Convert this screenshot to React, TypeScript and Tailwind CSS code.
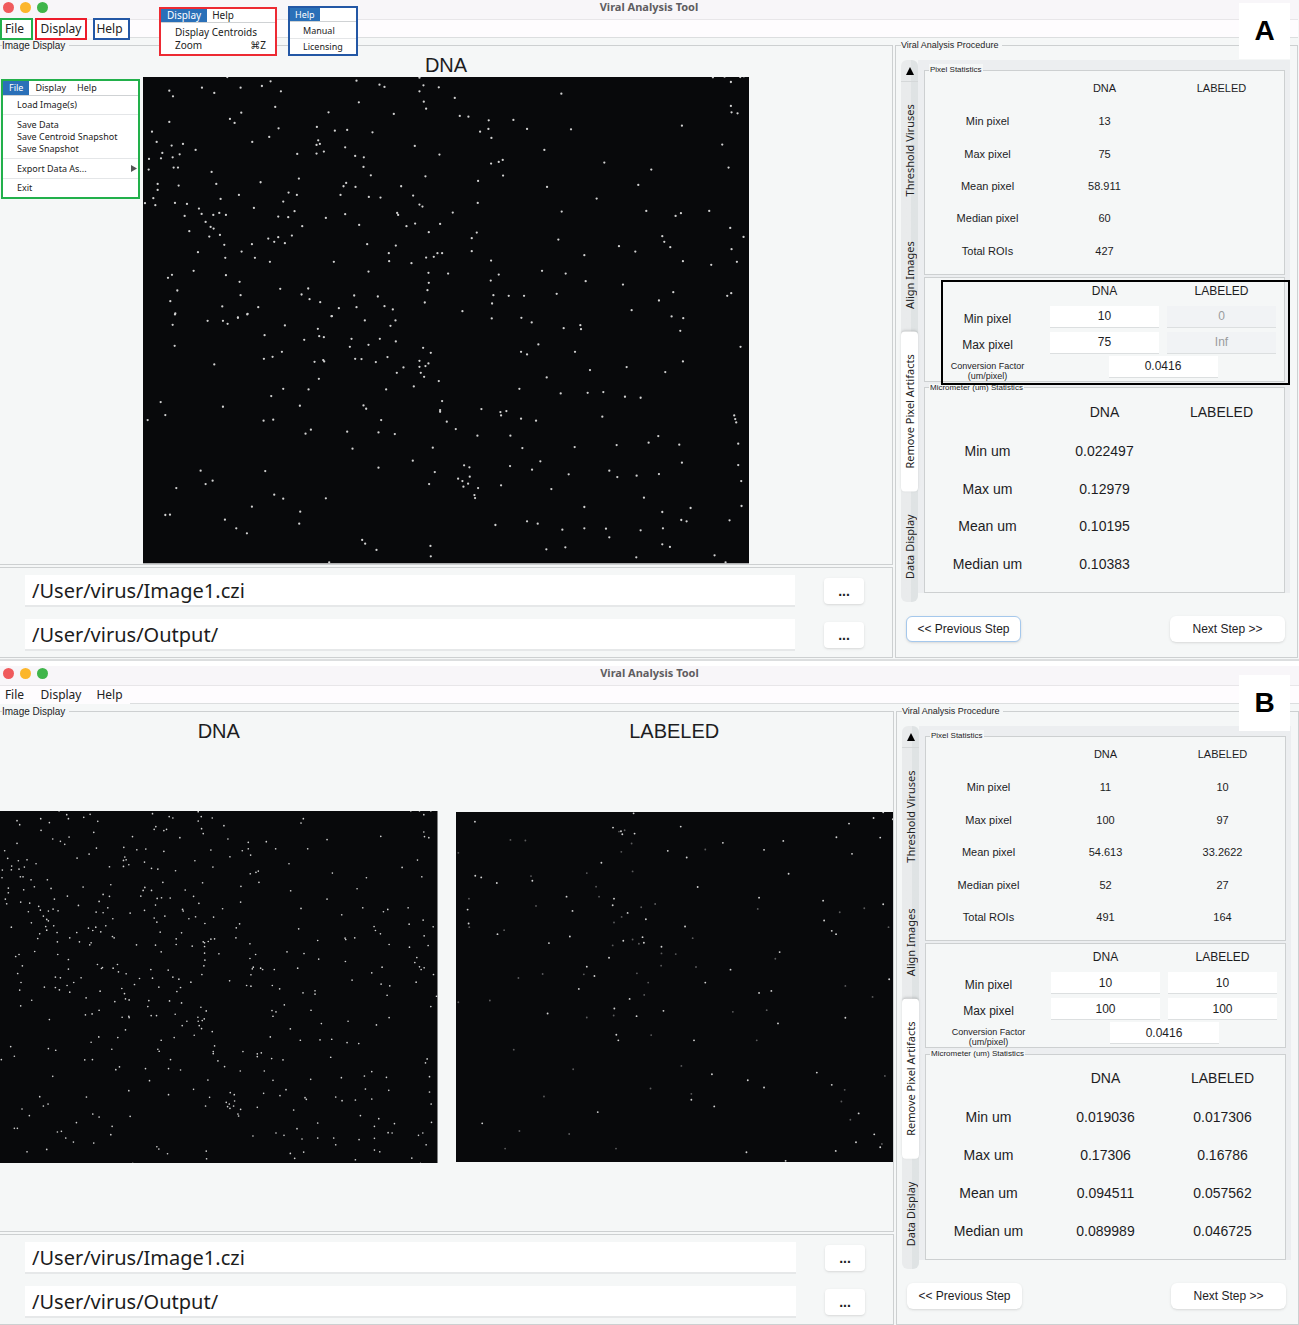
import React from 'react';
import { clsx } from 'clsx';

// Centroid lists, "x,y" pairs in scan units
const DNA_A_TOP_LEFT =
  '261,22 391,35 365,49 301,54 185,54 222,70 87,63 98,80 422,65 405,112 303,129 269,148 283,160 87,157 35,186 415,176 387,202 336,217 49,217 94,228 128,223 166,241 66,250 118,254 26,268 62,266 97,263 100,294 113,294 25,300 214,307 471,253 476,327 361,338 228,343 52,343 52,361 115,348 296,376 241,388 445,369 470,376 39,386 14,401 45,407 104,400 140,403 176,417 184,433 429,396 341,415 463,425 237,430 219,436 257,436 133,439 414,441 444,443 196,457 211,472 220,477 486,470 147,485 239,496 207,501 252,526 384,507 414,503 455,498 402,517 434,521 335,524 304,546 173,548 255,565 344,565 389,577 160,604 95,616 83,625 257,617 298,637 111,663 301,677 90,695 246,711 105,732 354,713 322,733 293,744 420,658 504,657 484,675 508,689 540,698 649,33 718,45 733,52 838,24 850,47 838,65 896,53 851,96 858,117 656,98 761,133 565,128 530,172 584,183 621,181 697,188 534,212 529,226 539,223 551,246 529,252 615,233 645,259 671,263 670,292 824,229 898,255 692,317 856,320 618,340 610,350 646,352 601,376 686,382 721,384 783,350 819,378 838,405 847,411 615,434 557,445 657,466 771,430 774,436 799,470 825,462 900,463 866,488 681,524 767,528 746,551 747,575 858,564 881,562 892,551 906,551 814,581 581,577 685,606 865,610 866,640 862,662 642,678 713,681 854,699 733,710 649,713 758,720 596,716 574,740';
const DNA_A_TOP_RIGHT =
  '29,85 349,72 44,139 70,141 131,152 205,151 130,178 105,186 139,205 246,178 378,179 298,241 173,271 161,277 138,282 174,318 99,334 478,279 619,300 580,346 306,352 455,387 98,400 23,429 350,426 604,424 95,489 80,506 80,545 340,510 418,557 571,546 652,500 658,517 676,533 708,431 692,439 793,424 856,475 896,502 860,539 876,577 714,575 799,586 138,573 161,615 137,633 9,612 291,604 362,612 422,635 534,645 145,677 191,679 237,679 335,673 141,702 52,725 685,668 642,693 560,722 847,679 859,671 804,23 839,21 886,22 897,20 858,37 858,109 860,128 878,131 711,168 832,225 851,294 522,530';
const DNA_A_BOTTOM_LEFT =
  '97,31 103,94 104,0 321,0 202,19 248,19 262,28 293,10 222,150 434,33 373,62 492,76 533,43 537,65 551,68 575,5 425,112 397,127 371,133 523,142 549,137 552,141 536,193 505,225 429,223 393,245 479,274 248,277 61,263 75,302 22,317 370,319 399,316 512,346 496,358 181,469 217,499 196,509 108,521 375,470 402,541 429,553 557,552 335,577 75,602 89,601 254,616 288,642 320,657 480,592 477,628 674,18 766,18 751,34 634,73 629,97 719,73 685,91 767,81 645,133 664,134 742,128 707,143 790,159 770,175 849,100 872,115 838,139 838,157 865,147 856,155 842,175 852,187 896,200 821,216 738,225 670,273 678,283 906,260 900,287 900,292 723,317 715,354 764,359 621,352 637,403 715,460 818,439 878,400 884,473 867,509 666,677 675,688 709,707 871,695 872,726 567,744';
const DNA_A_BOTTOM_RIGHT =
  '140,12 229,10 260,24 356,41 406,32 408,44 280,90 228,112 246,120 390,112 435,167 545,158 305,189 223,223 347,237 428,235 475,233 540,247 587,250 661,173 714,141 706,49 680,6 715,11 887,97 109,284 166,293 168,303 184,290 228,313 273,319 5,322 32,344 97,364 196,364 472,307 232,401 389,398 515,392 611,385 640,365 703,391 286,441 195,455 261,466 711,445 493,469 517,488 575,484 642,479 371,480 319,524 168,513 57,453 73,459 39,493 74,487 52,500 69,508 55,517 99,521 88,542 90,551 418,578 597,550 652,593 737,581 709,617 725,621 246,621 278,628 151,632 352,646 418,642 483,643 493,669 587,648 654,642 361,699 304,705 652,690 675,698 574,729 809,723 842,744 854,618 890,575 889,500 880,452 880,388 871,314 874,324 868,303';

const DNA_B =
  '177,20 200,31 205,43 270,30 251,39 293,51 122,43 148,55 51,49 59,61 123,78 281,84 207,98 158,104 181,111 194,120 51,117 289,131 267,149 231,161 14,139 23,162 55,169 81,166 108,178 35,185 73,188 57,194 34,196 7,197 6,220 61,217 69,217 93,226 142,226 103,247 153,252 71,256 25,251 25,265 249,248 16,284 20,298 62,293 89,296 163,284 202,275 116,306 121,317 85,322 145,320 159,314 174,319 235,303 130,335 140,345 145,349 94,355 137,366 161,364 34,368 140,377 119,388 113,402 171,384 172,412 209,400 230,384 238,412 397,97 371,129 410,136 437,134 374,158 378,166 370,168 386,181 370,186 328,187 433,173 454,192 473,194 457,28 507,37 518,41 467,67 462,75 491,79 499,75 539,100 491,141 594,22 603,37 594,50 636,41 604,73 609,88 671,64 584,169 632,137 683,104 689,157 638,188 526,199 488,234 607,235 332,241 434,249 429,258 454,258 422,275 309,270 328,276 297,291 555,257 580,276 471,282 484,280 510,281 466,302 433,318 390,326 323,310 309,325 288,323 338,343 494,335 462,341 470,353 547,315 549,320 566,343 586,337 640,338 667,313 596,297 614,357 480,383 544,385 317,364 287,368 265,371 278,378 302,382 337,396 342,400 273,415 269,421 409,421 466,422 483,442 528,403 528,420 576,425 609,412 613,415 624,411 632,404 643,403 613,426 613,446 614,467 611,484 605,510 656,448 104,441 173,450 205,465 205,494 57,450 47,456 67,484 53,507 292,480 307,489 304,492 339,491 352,480 355,502 378,508 166,518 181,520 243,520 221,534 63,534 133,548 166,549 201,543 178,556 209,563 59,557 95,587 62,604 258,580 300,560 418,522 452,495 457,521 504,497 518,518 536,524 572,533 541,549 530,561 476,548 403,540 365,552 373,567 376,583 387,586 344,591 446,588 443,606 508,589 544,595 453,633 469,633 525,629 602,608 618,619 593,638 594,650 612,643 606,648 597,663 604,672 560,650 546,663 636,681 582,692 522,699 297,617 276,628 256,631 148,645 366,638 386,635 387,639 376,676 353,699 296,697 273,713 335,734 483,707 473,734 477,740 643,724 639,741 639,747 511,765 653,769 505,792 541,796 436,792 347,795 358,787 32,726 43,755 4,765 145,732 167,737 254,766 277,765 158,815 673,786 623,826 448,828 386,858 505,870 580,854 628,878 616,904 119,876 144,898 130,904 66,913 88,933 259,877 278,928 297,937 390,935 229,954 336,965 332,990 43,971 52,971 172,982 184,980 197,1000 220,1012 281,1015 140,1034 81,1041 470,1026 476,1033 502,1047 618,1039 619,1062 398,1076 ' +
  '744,114 744,133 726,139 751,152 798,112 826,133 909,43 902,56 922,133 980,106 866,178 1141,96 1231,20 1257,20 1291,20 1270,31 1270,83 1272,97 1285,100 1251,167 1205,189 1264,217 774,200 767,204 750,208 776,234 722,246 721,293 871,259 996,206 1098,220 1070,253 980,284 902,312 1024,331 1087,310 1149,322 1162,315 1223,310 1268,347 1226,359 1298,367 1271,394 1283,423 1227,428 1121,366 1125,378 1140,388 1166,420 895,373 952,408 1034,401 1036,405 1063,400 718,358 708,370 707,400 749,418 766,450 749,462 860,442 911,447 955,464 1035,471 759,488 756,493 781,491 787,495 822,495 892,491 752,511 688,529 739,543 752,545 816,543 838,553 1055,527 1114,505 1145,488 1142,539 1168,544 1160,572 1249,459 1243,474 1257,487 1271,490 1262,495 1299,510 1247,533 1308,575 1291,606 908,565 944,559 944,569 852,601 815,618 827,622 818,635 932,617 963,657 1043,650 1128,661 1166,639 870,673 810,697 900,707 959,706 994,704 1040,714 1075,717 991,758 728,741 771,748 783,745 771,756 814,762 848,766 720,799 792,799 818,827 931,824 1023,819 1092,814 1114,801 1158,818 1165,857 1095,853 857,855 839,873 790,866 914,879 918,884 1006,877 1025,888 1065,886 1114,883 771,908 880,916 690,864 702,870 678,893 687,898 703,889 700,904 682,906 689,911 721,914 713,928 715,934 1280,763 1275,775 1287,816 1287,862 1292,898 1293,953 1080,933 1135,942 1122,965 1182,957 952,955 890,972 851,992 827,985 758,994 905,1003 952,1000 1000,1000 1006,1020 1076,1005 1122,1001 1163,984 1175,985 1254,992 1267,985 1277,1020 870,1046 883,1061 910,1042 1122,1036 1138,1041 1065,1065 1234,1060 1260,1076';

const LABELED_B =
  '550,24 72,49 488,67 512,78 516,87 553,85 692,64 653,137 710,157 819,113 453,173 73,212 91,217 245,227 138,234 743,246 348,275 366,318 491,281 487,301 532,324 587,343 705,365 358,395 519,408 581,414 577,397 295,415 140,388 53,356 50,314 476,459 409,486 432,514 385,553 538,583 492,612 640,619 559,635 291,627 498,691 504,708 732,708 766,534 842,495 634,426 990,442 965,559 928,278 1199,55 1273,38 1302,21 1331,42 1161,96 1293,97 1208,146 1001,107 1017,206 1121,287 1302,298 1124,347 1147,378 1160,388 1320,524 1188,640 985,657 786,810 894,828 943,850 1102,805 1147,842 724,887 793,907 442,924 94,958 1228,928 1275,991 1220,1015 1293,1030 1159,1041 890,1045 1008,1071 928,565 943,134';
const LABELED_B_FAINT =
  '179,104 224,106 22,143 241,213 409,204 437,245 446,275 54,281 256,303 547,199 544,115 513,140 523,75 506,79 573,307 615,297 514,336 491,353 547,404 566,417 487,422 634,446 633,483 677,448 738,487 728,400 560,506 594,534 582,571 276,508 203,520 400,509 117,588 22,593 409,639 490,633 603,692 189,736 368,795 694,785 280,877 601,853 724,869 921,708 849,622 951,617 924,312 977,462 1171,322 1245,310 1318,367 1188,544 1270,577 1307,815 1186,857 1176,892 1203,947 1298,1020 206,981 163,1034 497,1034 160,376 55,367 766,133 356,990';

interface Centroids {
  points: string;
  dx?: number;
  dy?: number;
  faint?: boolean;
}

interface MicrographProps {
  title: string;
  viewBox: string;
  layers: Centroids[];
  radius: number;
}

interface Row {
  name: string;
  dna: string;
  labeled?: string;
}

const Micrograph: React.FC<MicrographProps> = ({ title, viewBox, layers, radius }) => {
  const [x, y, w, h] = viewBox.split(' ').map(Number);
  return (
    <svg viewBox={viewBox} className="block w-full" role="img" aria-label={`${title} image`}>
      <rect x={x} y={y} width={w} height={h} fill="#08090b" />
      {layers.map(({ points, dx = 0, dy = 0, faint }, i) => (
        <g key={i} transform={`translate(${dx} ${dy})`} fill={faint ? '#5c5c5e' : '#d2d2d2'}>
          {points.split(' ').map((p) => {
            const [cx, cy] = p.split(',');
            return <circle key={p} cx={cx} cy={cy} r={radius} />;
          })}
        </g>
      ))}
    </svg>
  );
};

const StatsTable: React.FC<{ rows: Row[]; className: string; headClassName: string }> = ({ rows, className, headClassName }) => (
  <table className={clsx('w-full grow table-fixed text-center', className)}>
    <thead>
      <tr className={headClassName}>
        <td />
        <th className="font-normal">DNA</th>
        <th className="font-normal">LABELED</th>
      </tr>
    </thead>
    <tbody>
      {rows.map((row) => (
        <tr key={row.name}>
          <th className="font-normal">{row.name}</th>
          <td>{row.dna}</td>
          <td>{row.labeled}</td>
        </tr>
      ))}
    </tbody>
  </table>
);

const TABS = ['Threshold Viruses', 'Align Images', 'Remove Pixel Artifacts', 'Data Display'];

const TabStrip: React.FC = () => (
  <div role="tablist" className="flex w-[17px] shrink-0 flex-col rounded-md bg-linear-to-r from-[#e9ebec] from-60% to-[#dfe3e4] to-60%">
    <button aria-label="Scroll tabs up" className="flex h-[22px] items-center justify-center border-b border-[#d5d8d9]">
      <svg width="8" height="8" viewBox="0 0 8 8">
        <path d="M4 0L8 8H0Z" fill="#000" />
      </svg>
    </button>
    {TABS.map((tab) => {
      const active = tab === 'Remove Pixel Artifacts';
      return (
        <button
          key={tab}
          role="tab"
          aria-selected={active}
          className={clsx(
            'w-[17px] flex-auto rotate-180 pt-4 pb-4 text-center font-["Noto_Sans",sans-serif] text-[11px] leading-[17px] whitespace-nowrap text-[#222] [writing-mode:vertical-rl]',
            active && 'rounded bg-white shadow-sm'
          )}
        >
          {tab}
        </button>
      );
    })}
  </div>
);

interface FieldProps {
  label: string;
  value: string;
  disabled?: boolean;
}

const NumberField: React.FC<FieldProps> = ({ label, value, disabled }) => (
  <input
    type="text"
    aria-label={label}
    defaultValue={value}
    disabled={disabled}
    className="block h-[22px] w-[109px] border-b border-[#dcdfe0] bg-white text-center text-[12px] disabled:bg-[#f1f3f5] disabled:text-[#9a9c9e]"
  />
);

interface ThresholdProps {
  min: string[];
  max: string[];
  labeled: boolean;
  highlighted?: boolean;
}

const ThresholdForm: React.FC<ThresholdProps> = ({ min, max, labeled, highlighted }) => (
  <div className="relative h-[105px] border border-[#cdd0d1] bg-[#f5f7f7] px-1">
    <div className="grid auto-rows-[26px] grid-cols-3 items-center justify-items-center text-[12px]">
      <span />
      <span>DNA</span>
      <span>LABELED</span>
      <span className="self-end leading-[22px]">Min pixel</span>
      <NumberField label="Min pixel DNA" value={min[0]} />
      <NumberField label="Min pixel LABELED" value={min[1]} disabled={!labeled} />
      <span className="self-end leading-[22px]">Max pixel</span>
      <NumberField label="Max pixel DNA" value={max[0]} />
      <NumberField label="Max pixel LABELED" value={max[1]} disabled={!labeled} />
    </div>
    <div className="grid h-[25px] grid-cols-3 justify-items-center">
      <span className="pt-[5px] text-center text-[9px] leading-[10px]">
        Conversion Factor
        <br />
        (um/pixel)
      </span>
      <div className="col-span-2">
        <NumberField label="Conversion Factor (um/pixel)" value="0.0416" />
      </div>
    </div>
    {highlighted && <div className="pointer-events-none absolute top-[2px] -right-[6px] -bottom-[4px] left-4 border-2 border-black" />}
  </div>
);

interface PathRowProps {
  label: string;
  value: string;
}

const PathRow: React.FC<PathRowProps> = ({ label, value }) => (
  <div className="flex items-center gap-[29px]">
    <input
      type="text"
      aria-label={label}
      defaultValue={value}
      className='h-8 min-w-0 grow border-b-2 border-[#e6e8e9] bg-white px-[7px] font-["Noto_Sans",sans-serif] text-[20px] text-[#1c1c1c]'
    />
    <button aria-label={`Browse ${label}`} className="h-[26px] w-10 rounded bg-white text-[14px] font-bold shadow-sm">
      ...
    </button>
  </div>
);

const MENU_BOX = 'absolute bg-white border-2 font-["Noto_Sans",sans-serif] text-[#222]';
const MENU_ACTIVE = 'bg-[#2a70b8] px-[6px] text-white';

// Expanded menus shown on top of the window
const OpenMenus: React.FC = () => (
  <>
    <div className={clsx(MENU_BOX, 'top-[7px] left-[159px] w-[118px] border-[#ed2a33] pb-[2px] text-[10px] leading-[13px]')}>
      <div className="mb-[3px] flex gap-[5px] border-b border-[#cfd2d4]">
        <span className={MENU_ACTIVE}>Display</span>
        <span>Help</span>
      </div>
      <div role="menu" className="flex flex-col pr-[9px] pl-[14px]">
        <button role="menuitem" className="text-left whitespace-nowrap">Display Centroids</button>
        <button role="menuitem" className="flex justify-between">
          <span>Zoom</span>
          <span className='font-["Noto_Sans","DejaVu_Sans",sans-serif]'>⌘Z</span>
        </button>
      </div>
    </div>
    <div className={clsx(MENU_BOX, 'top-[6px] left-[288px] w-[70px] border-[#2357a5] text-[9px] leading-[13px]')}>
      <div className="flex border-b border-[#cfd2d4]">
        <span className="bg-[#2a70b8] px-[5px] text-white">Help</span>
      </div>
      <div role="menu" className="flex flex-col">
        <button role="menuitem" className="h-4 pl-[13px] text-left">Manual</button>
        <button role="menuitem" className="h-4 border-t border-[#e4e6e8] pl-[13px] text-left">Licensing</button>
      </div>
    </div>
    <div className={clsx(MENU_BOX, 'top-[79px] left-[1px] w-[139px] border-[#22b04b] text-[9px] leading-[12px]')}>
      <div className="flex gap-[11px] border-b border-[#cfd2d4] leading-[14px]">
        <span className="-mr-[5px] bg-[#2a70b8] px-[6px] text-white">File</span>
        <span>Display</span>
        <span>Help</span>
      </div>
      <div role="menu" className="flex flex-col *:pl-[14px] *:text-left">
        <button role="menuitem" className="h-[18px]">Load Image(s)</button>
        <button role="menuitem" className="border-t border-[#e4e6e8] pt-1">Save Data</button>
        <button role="menuitem">Save Centroid Snapshot</button>
        <button role="menuitem" className="pb-[3px]">Save Snapshot</button>
        <button role="menuitem" className="flex h-5 items-center justify-between border-t border-[#e4e6e8] pr-[1px]">
          Export Data As...
          <svg width="6" height="7" viewBox="0 0 6 7">
            <path d="M0 0L6 3.5L0 7Z" fill="#555" />
          </svg>
        </button>
        <button role="menuitem" className="h-[19px] border-t border-[#e4e6e8]">Exit</button>
      </div>
    </div>
  </>
);

interface ToolWindowProps {
  tag: string;
  annotated?: boolean;
  labeled: boolean;
  pixelRows: Row[];
  micronRows: Row[];
  min: string[];
  max: string[];
  children: React.ReactNode;
}

const GROUP = 'border-[#cdd0d1]';

const ToolWindow: React.FC<ToolWindowProps> = ({ tag, annotated, labeled, pixelRows, micronRows, min, max, children }) => (
  <section className={clsx('relative flex flex-col bg-[#f5f7f7]', annotated && 'border-b-2 border-[#dcdedf] pr-px pb-px')}>
    <header className="relative flex h-5 shrink-0 items-center justify-center border-b border-[#e8e6e9] bg-[#f8f6f9] pb-[6px]">
      <div className="absolute top-[2px] left-[3px] flex gap-[6px]">
        <span className="size-[11px] rounded-full bg-[#f05a5c]" />
        <span className="size-[11px] rounded-full bg-[#fcb62b]" />
        <span className="size-[11px] rounded-full bg-[#3fb54a]" />
      </div>
      <h1 className='font-["Noto_Sans",sans-serif] text-[11px] leading-none font-bold text-[#5f5d61]'>Viral Analysis Tool</h1>
    </header>
    <nav className='relative flex h-[18px] shrink-0 items-center bg-[#fefcfe] font-["Noto_Sans",sans-serif] text-[12px] leading-none text-[#222]'>
      <button className={clsx('h-[22px] w-[33px] shrink-0 border-2 pr-1', annotated ? 'border-[#22b04b] bg-white' : 'border-transparent')}>File</button>
      <button className={clsx('ml-[2px] h-[22px] w-[52px] shrink-0 border-2', annotated ? 'border-[#ed1c2b] bg-white' : 'border-transparent')}>
        Display
      </button>
      <button className={clsx('ml-[6px] h-[22px] w-[37px] shrink-0 border-2 pr-1', annotated ? 'border-[#2357a5] bg-white' : 'border-transparent')}>
        Help
      </button>
      <div className="grow self-stretch border-b border-[#dcdedf]" />
    </nav>

    <div className="flex grow gap-[2px]">
      <div className="flex min-w-0 grow flex-col gap-[2px]">
        <fieldset className={clsx('flex min-w-0 grow flex-col border-y border-r', GROUP)}>
          <legend className="ml-[2px] pr-1 text-[10px] leading-[15px]">Image Display</legend>
          {children}
        </fieldset>
        <div className={clsx('flex flex-col gap-3 border-y border-r pt-[7px] pr-[28px] pb-[6px] pl-[25px]', GROUP)}>
          <PathRow label="image file" value="/User/virus/Image1.czi" />
          <PathRow label="output folder" value="/User/virus/Output/" />
        </div>
      </div>

      <fieldset className={clsx('flex w-[403px] shrink-0 flex-col border pl-[5px]', GROUP)}>
        <legend className="pr-1 text-[9px] leading-[15px]">Viral Analysis Procedure</legend>
        <div className="mt-[7px] flex grow">
          <TabStrip />
          <div role="tabpanel" className="mr-[7px] mb-[9px] flex grow flex-col gap-[2px] bg-[#eceef0] pt-1 pr-[5px] pl-[6px]">
            <fieldset className={clsx('flex flex-[102] flex-col border bg-[#f5f7f7] px-1 pb-[7px]', GROUP)}>
              <legend className="bg-[#f5f7f7] px-px text-[8px] leading-[12px]">Pixel Statistics</legend>
              <StatsTable rows={pixelRows} className="text-[11px] leading-4" headClassName="h-[29px] align-top *:pt-1" />
            </fieldset>
            <ThresholdForm min={min} max={max} labeled={labeled} highlighted={annotated} />
            <fieldset className={clsx('flex flex-[100] flex-col border bg-[#f5f7f7] px-1 pb-[9px]', GROUP)}>
              <legend className="bg-[#f5f7f7] px-px text-[8px] leading-[8px]">Micrometer (um) Statistics</legend>
              <StatsTable rows={micronRows} className="text-[14px] leading-5" headClassName="h-10" />
            </fieldset>
          </div>
        </div>
        <div className="flex justify-between pt-[14px] pr-[12px] pb-[15px] pl-[5px]">
          <button
            className={clsx('h-[26px] w-[115px] rounded-md border bg-white text-[12px] shadow-sm', annotated ? 'border-[#a5c8ec]' : 'border-transparent')}
          >
            {'<< Previous Step'}
          </button>
          <button className="h-[26px] w-[115px] rounded-md bg-white text-[12px] shadow-sm">{'Next Step >>'}</button>
        </div>
      </fieldset>
    </div>

    <div
      className={clsx(
        'absolute right-[9px] flex h-14 w-[51px] items-center justify-center bg-white text-[28px] font-bold text-black',
        annotated ? 'top-[3px]' : 'top-[9px]'
      )}
    >
      {tag}
    </div>
    {annotated && <OpenMenus />}
  </section>
);

export default function App() {
  return (
    <main className='grid min-h-screen grid-rows-[661fr_659fr] gap-[5px] bg-white font-["Liberation_Sans",Arial,sans-serif] text-[#1d1d1f]'>
      <ToolWindow
        tag="A"
        annotated
        labeled={false}
        pixelRows={[
          { name: 'Min pixel', dna: '13' },
          { name: 'Max pixel', dna: '75' },
          { name: 'Mean pixel', dna: '58.911' },
          { name: 'Median pixel', dna: '60' },
          { name: 'Total ROIs', dna: '427' },
        ]}
        micronRows={[
          { name: 'Min um', dna: '0.022497' },
          { name: 'Max um', dna: '0.12979' },
          { name: 'Mean um', dna: '0.10195' },
          { name: 'Median um', dna: '0.10383' },
        ]}
        min={['10', '0']}
        max={['75', 'Inf']}
      >
        <h2 className="text-center text-[20px] leading-6">DNA</h2>
        <div className="mx-auto flex w-[68%] grow items-center">
          <Micrograph
            title="DNA"
            viewBox="8 22 1821 1460"
            radius={3.4}
            layers={[
              { points: DNA_A_TOP_LEFT },
              { points: DNA_A_TOP_RIGHT, dx: 915 },
              { points: DNA_A_BOTTOM_LEFT, dy: 735 },
              { points: DNA_A_BOTTOM_RIGHT, dx: 915, dy: 735 },
            ]}
          />
        </div>
      </ToolWindow>

      <ToolWindow
        tag="B"
        labeled
        pixelRows={[
          { name: 'Min pixel', dna: '11', labeled: '10' },
          { name: 'Max pixel', dna: '100', labeled: '97' },
          { name: 'Mean pixel', dna: '54.613', labeled: '33.2622' },
          { name: 'Median pixel', dna: '52', labeled: '27' },
          { name: 'Total ROIs', dna: '491', labeled: '164' },
        ]}
        micronRows={[
          { name: 'Min um', dna: '0.019036', labeled: '0.017306' },
          { name: 'Max um', dna: '0.17306', labeled: '0.16786' },
          { name: 'Mean um', dna: '0.094511', labeled: '0.057562' },
          { name: 'Median um', dna: '0.089989', labeled: '0.046725' },
        ]}
        min={['10', '10']}
        max={['100', '100']}
      >
        <div className="grid grid-cols-2 gap-[18px] text-center text-[20px] leading-6">
          <h2>DNA</h2>
          <h2>LABELED</h2>
        </div>
        <div className="grid grow grid-cols-2 items-center gap-[18px]">
          <Micrograph title="DNA" viewBox="0 20 1311 1057" radius={2.5} layers={[{ points: DNA_B }]} />
          <Micrograph
            title="LABELED"
            viewBox="15 20 1318 1057"
            radius={2.8}
            layers={[{ points: LABELED_B }, { points: LABELED_B_FAINT, faint: true }]}
          />
        </div>
      </ToolWindow>
    </main>
  );
}
